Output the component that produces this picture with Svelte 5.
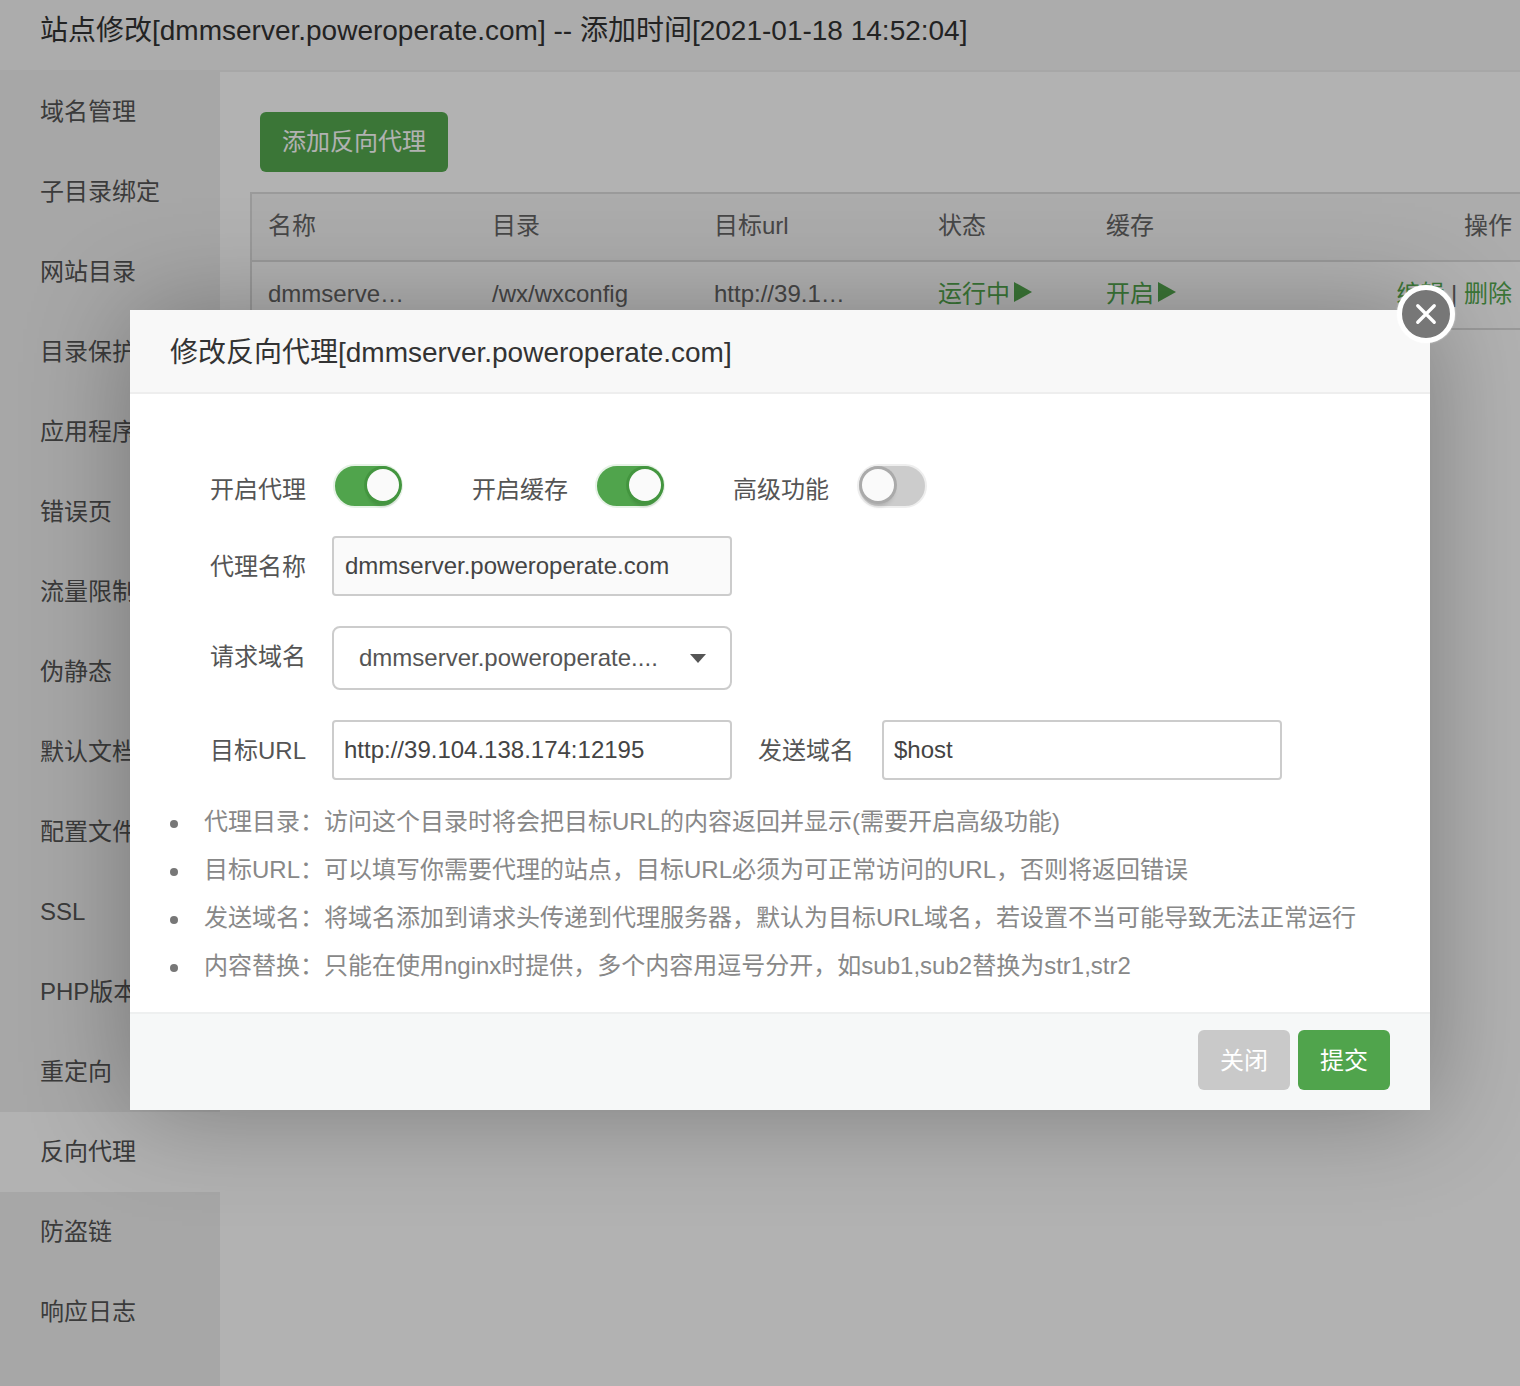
<script>
  const menu = ['域名管理','子目录绑定','网站目录','目录保护','应用程序','错误页','流量限制','伪静态','默认文档','配置文件','SSL','PHP版本','重定向','反向代理','防盗链','响应日志'];
  const tips = [
    '代理目录：访问这个目录时将会把目标URL的内容返回并显示(需要开启高级功能)',
    '目标URL：可以填写你需要代理的站点，目标URL必须为可正常访问的URL，否则将返回错误',
    '发送域名：将域名添加到请求头传递到代理服务器，默认为目标URL域名，若设置不当可能导致无法正常运行',
    '内容替换：只能在使用nginx时提供，多个内容用逗号分开，如sub1,sub2替换为str1,str2'
  ];
  let proxyOn = $state(true);
  let cacheOn = $state(true);
  let advanced = $state(false);
</script>

<div class="page">
  <header class="top">站点修改[dmmserver.poweroperate.com] -- 添加时间[2021-01-18 14:52:04]</header>
  <div class="content">
    <nav class="side">
      {#each menu as item}
        <div class="side-item" class:on={item === '反向代理'}>{item}</div>
      {/each}
    </nav>
    <main class="main">
      <button class="add" type="button">添加反向代理</button>
      <table class="list">
        <colgroup>
          <col style="width:224px" /><col style="width:222px" /><col style="width:224px" />
          <col style="width:168px" /><col style="width:200px" /><col />
        </colgroup>
        <thead>
          <tr><th>名称</th><th>目录</th><th>目标url</th><th>状态</th><th>缓存</th><th class="right">操作</th></tr>
        </thead>
        <tbody>
          <tr>
            <td>dmmserve…</td><td>/wx/wxconfig</td><td>http://39.1…</td>
            <td class="green">运行中<span class="play"></span></td>
            <td class="green">开启<span class="play"></span></td>
            <td class="right green">编辑 <span class="sep">|</span> 删除</td>
          </tr>
        </tbody>
      </table>
    </main>
  </div>

  <div class="shade"></div>

  <section class="modal">
    <h2 class="modal-title">修改反向代理[dmmserver.poweroperate.com]</h2>
    <button class="close" type="button" aria-label="关闭">
      <svg viewBox="0 0 24 24" width="22" height="22"><path d="M3 3 21 21M21 3 3 21" stroke="#fff" stroke-width="3.6" stroke-linecap="round" fill="none" /></svg>
    </button>

    <div class="modal-body">
      <div class="row switches">
        <span class="label">开启代理</span>
        <button class="switch" class:active={proxyOn} type="button" aria-label="开启代理" onclick={() => (proxyOn = !proxyOn)}></button>
        <span class="label second">开启缓存</span>
        <button class="switch" class:active={cacheOn} type="button" aria-label="开启缓存" onclick={() => (cacheOn = !cacheOn)}></button>
        <span class="label third">高级功能</span>
        <button class="switch last" class:active={advanced} type="button" aria-label="高级功能" onclick={() => (advanced = !advanced)}></button>
      </div>

      <div class="row name-row">
        <span class="label">代理名称</span>
        <input class="field readonly" value="dmmserver.poweroperate.com" readonly />
      </div>

      <div class="row domain-row">
        <span class="label domain-label">请求域名</span>
        <div class="select">
          <span>dmmserver.poweroperate....</span>
          <i class="caret"></i>
        </div>
      </div>

      <div class="row url-row">
        <span class="label">目标URL</span>
        <input class="field" value="http://39.104.138.174:12195" />
        <span class="label send">发送域名</span>
        <input class="field" value="$host" />
      </div>

      <ul class="tips">
        {#each tips as tip}
          <li>{tip}</li>
        {/each}
      </ul>
    </div>

    <footer class="modal-foot">
      <button class="btn grey" type="button">关闭</button>
      <button class="btn ok" type="button">提交</button>
    </footer>
  </section>
</div>

<style>
  :global(body) {
    margin: 0;
    background: #fff;
    font-family: "Liberation Sans", "Noto Sans CJK SC", sans-serif;
  }

  .page {
    position: relative;
    width: 1520px;
    height: 1386px;
    overflow: hidden;
    color: #444;
    font-size: 24px;
  }

  .top {
    height: 70px;
    line-height: 62px;
    padding-left: 40px;
    background: #f7f7f7;
    border-bottom: 2px solid #f0f0f0;
    font-size: 28px;
    color: #333;
  }

  .content {
    display: flex;
    height: 1314px;
  }

  .side {
    width: 220px;
    flex-shrink: 0;
    background: #f0f0f0;
  }

  .side-item {
    height: 80px;
    line-height: 80px;
    padding-left: 40px;
    color: #555;
  }

  .side-item.on {
    background: #fff;
  }

  .main {
    flex: 1;
    min-width: 0;
    padding: 40px 0 0 30px;
  }

  .add {
    display: block;
    margin-left: 10px;
    width: 188px;
    height: 60px;
    padding: 0 0 5px;
    border: 0;
    border-radius: 6px;
    background: #55aa50;
    color: #fff;
    font: inherit;
  }

  .list {
    width: 1278px;
    margin-top: 20px;
    table-layout: fixed;
    border-collapse: separate;
    border-spacing: 0;
    border-top: 2px solid #ddd;
    border-left: 2px solid #ddd;
    color: #666;
  }

  .list th {
    box-sizing: border-box;
    height: 68px;
    padding: 0 16px 8px;
    background: #f6f6f6;
    border-bottom: 2px solid #ddd;
    text-align: left;
    font-weight: 400;
  }

  .list td {
    box-sizing: border-box;
    height: 68px;
    padding: 0 16px 2px;
    border-bottom: 2px solid #ddd;
    white-space: nowrap;
  }

  .list td.green {
    padding-bottom: 8px;
  }

  .list .right {
    text-align: right;
  }

  .green {
    color: #55aa50;
  }

  .sep {
    color: #666;
  }

  .play {
    display: inline-block;
    margin-left: 4px;
    border-left: 18px solid #55aa50;
    border-top: 10px solid transparent;
    border-bottom: 10px solid transparent;
  }

  .shade {
    position: absolute;
    inset: 0;
    background: rgba(0, 0, 0, 0.3);
  }

  .modal {
    position: absolute;
    left: 130px;
    top: 310px;
    width: 1300px;
    height: 800px;
    display: flex;
    flex-direction: column;
    background: #fff;
    box-shadow: 2px 2px 100px rgba(0, 0, 0, 0.3);
  }

  .modal-title {
    height: 82px;
    margin: 0;
    padding-left: 40px;
    line-height: 86px;
    background: #f8f8f8;
    border-bottom: 2px solid #eee;
    font-size: 28px;
    font-weight: 400;
    color: #333;
  }

  .close {
    position: absolute;
    left: 1267px;
    top: -25px;
    width: 58px;
    height: 58px;
    display: flex;
    align-items: center;
    justify-content: center;
    padding: 0;
    border: 5px solid #fff;
    border-radius: 50%;
    background: #777;
    box-shadow: 0 0 2px rgba(255, 255, 255, 0.7);
  }

  .modal-body {
    flex: 1;
    padding: 70px 40px 0;
    border-bottom: 2px solid #eef0f0;
  }

  .row {
    display: flex;
    align-items: center;
  }

  .label {
    width: 96px;
    margin: 0 26px 0 40px;
    padding-bottom: 4px;
    white-space: nowrap;
    color: #555;
  }

  .label.domain-label {
    padding-bottom: 8px;
  }

  .switches {
    height: 44px;
  }

  .switches .label {
    padding-bottom: 0;
    padding-top: 2px;
  }

  .switches .label.second {
    margin-left: 69px;
  }

  .switches .label.third {
    margin-left: 68px;
  }

  .switch {
    position: relative;
    box-sizing: border-box;
    width: 70px;
    height: 44px;
    margin-left: 1px;
    padding: 0;
    border: 2px solid #eee;
    border-radius: 22px;
    background: #ccc;
  }

  .switch.last {
    margin-left: 2px;
  }

  .switch::after {
    content: '';
    position: absolute;
    left: 3px;
    top: 3px;
    width: 32px;
    height: 32px;
    border-radius: 50%;
    background: #fafafa;
    box-shadow: 0 0 0 3px #aaa, 0 5px 4px rgba(0, 0, 0, 0.15);
  }

  .switch.active {
    background: #50a44c;
    border-color: #e6f2e6;
  }

  .switch.active::after {
    left: 32px;
    box-shadow: 0 0 0 3px #43953f, 0 6px 3px rgba(0, 0, 0, 0.1);
  }

  .field {
    box-sizing: border-box;
    width: 400px;
    height: 60px;
    padding: 0 10px;
    border: 2px solid #ccc;
    border-radius: 4px;
    background: #fff;
    color: #444;
    font: inherit;
    outline: none;
  }

  .field.readonly {
    background: #fafafa;
    padding-left: 11px;
  }

  .name-row {
    margin-top: 28px;
  }

  .domain-row {
    margin-top: 30px;
  }

  .select {
    box-sizing: border-box;
    width: 400px;
    height: 64px;
    display: flex;
    align-items: center;
    justify-content: space-between;
    padding: 0 24px 0 25px;
    border: 2px solid #ccc;
    border-radius: 8px;
    color: #555;
  }

  .caret {
    width: 0;
    height: 0;
    border-top: 9px solid #555;
    border-left: 8px solid transparent;
    border-right: 8px solid transparent;
  }

  .url-row {
    margin-top: 30px;
  }

  .url-row .send {
    margin-left: 26px;
    margin-right: 28px;
  }

  .tips {
    margin: 18px 0 0;
    padding: 0;
    list-style: none;
    color: #888;
  }

  .tips li {
    display: flex;
    align-items: center;
    gap: 26px;
    height: 48px;
    line-height: 48px;
    white-space: nowrap;
  }

  .tips li::before {
    content: '';
    flex-shrink: 0;
    width: 8px;
    height: 8px;
    margin-top: 4px;
    border-radius: 50%;
    background: #777;
  }

  .modal-foot {
    height: 96px;
    flex-shrink: 0;
    display: flex;
    justify-content: flex-end;
    align-items: flex-start;
    gap: 8px;
    padding: 16px 40px 0;
    box-sizing: border-box;
    background: #f6f8f8;
  }

  .btn {
    height: 60px;
    width: 92px;
    padding: 0 0 4px;
    border: 0;
    border-radius: 6px;
    color: #fff;
    font: inherit;
  }

  .btn.grey {
    background: #c9c9c9;
  }

  .btn.ok {
    background: #50a44c;
  }
</style>
